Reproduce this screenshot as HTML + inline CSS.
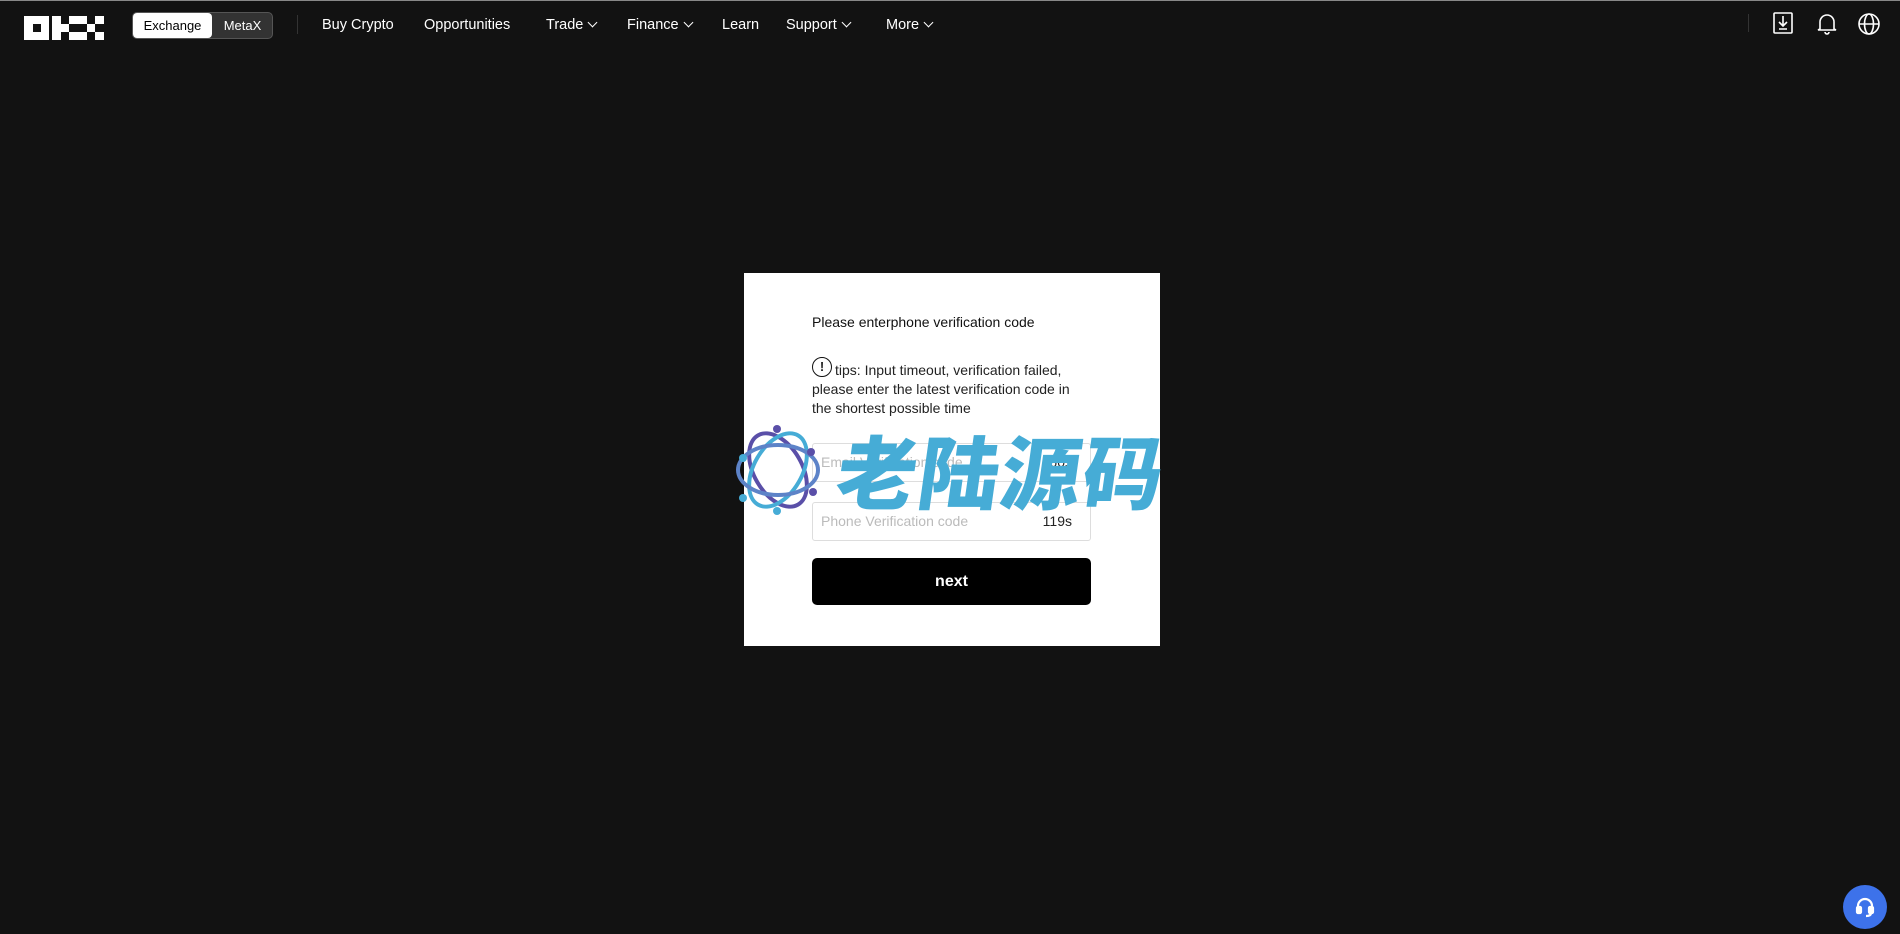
<!DOCTYPE html>
<html><head><meta charset="utf-8"><style>
*{margin:0;padding:0;box-sizing:border-box}
body{width:1900px;height:934px;background:#121212;font-family:"Liberation Sans",sans-serif;position:relative;overflow:hidden;color:#fff}
.topline{position:absolute;left:0;top:0;width:1900px;height:1px;background:#888}
.nav{position:absolute;top:25px;font-size:14.5px;color:#fff;transform:translateY(-50%);white-space:nowrap}
.chev{display:inline-block;width:7px;height:7px;border-right:1.5px solid #fff;border-bottom:1.5px solid #fff;transform:rotate(45deg);margin-left:6px;position:relative;top:-3px}
.toggle{position:absolute;left:132px;top:12px;width:141px;height:27px;border:1px solid #555;border-radius:5px;background:#333;font-size:13px}
.toggle .ex{position:absolute;left:0;top:0;width:79px;height:25px;background:#fff;color:#000;border-radius:4px;text-align:center;line-height:25px}
.toggle .mx{position:absolute;left:79px;top:0;width:61px;height:25px;color:#fff;text-align:center;line-height:25px}
.logo div{position:absolute;background:#fff;width:8.5px;height:8px}
.modal{position:absolute;left:744px;top:273px;width:416px;height:373px;background:#fff;color:#111}
.t1{position:absolute;left:68px;top:41px;font-size:14px}
.tips{position:absolute;left:68px;top:84px;width:270px;font-size:14px;line-height:19px;color:#222}
.ic{display:inline-block;width:20px;height:20px;border:1.6px solid #111;border-radius:50%;text-align:center;font-size:13px;font-weight:bold;line-height:17px;margin-right:3px;vertical-align:4px}
.inp{position:absolute;left:68px;width:279px;height:39px;border:1px solid #ddd;border-radius:3px;font-size:14px;color:#bbb;padding-left:8px;line-height:37px}
.inp span{position:absolute;right:18px;color:#222}
.btn{position:absolute;left:68px;top:285px;width:279px;height:47px;background:#000;border-radius:5px;color:#fff;font-weight:bold;font-size:16px;text-align:center;line-height:47px}
.wm{position:absolute;left:838px;top:424px;font-family:"Noto Sans CJK SC",sans-serif;font-weight:900;font-size:80px;color:#46acd6;letter-spacing:2px;transform:skewX(-8deg);line-height:90px;white-space:nowrap}
.sup{position:absolute;left:1843px;top:885px;width:44px;height:44px;border-radius:50%;background:#3d72ea}
</style></head><body>
<div class="topline"></div>
<div class="logo">
<div style="left:24px;top:16px;width:25px;height:24px"></div>
<div style="left:32.5px;top:24px;background:#121212"></div>
<div style="left:52px;top:16px"></div><div style="left:52px;top:24px"></div><div style="left:52px;top:32px"></div>
<div style="left:60.5px;top:24px"></div><div style="left:69px;top:16px"></div><div style="left:69px;top:32px"></div>
<div style="left:78px;top:16px"></div><div style="left:95px;top:16px"></div><div style="left:86.5px;top:24px"></div>
<div style="left:78px;top:32px"></div><div style="left:95px;top:32px"></div>
</div>
<div class="toggle"><div class="ex">Exchange</div><div class="mx">MetaX</div></div>
<div style="position:absolute;left:297px;top:15px;width:1px;height:19px;background:#333"></div>
<div class="nav" style="left:322px">Buy Crypto</div>
<div class="nav" style="left:424px">Opportunities</div>
<div class="nav" style="left:546px">Trade<i class="chev"></i></div>
<div class="nav" style="left:627px">Finance<i class="chev"></i></div>
<div class="nav" style="left:722px">Learn</div>
<div class="nav" style="left:786px">Support<i class="chev"></i></div>
<div class="nav" style="left:886px">More<i class="chev"></i></div>
<div style="position:absolute;left:1748px;top:14px;width:1px;height:18px;background:#333"></div>
<svg style="position:absolute;left:1772px;top:11px" width="22" height="24" viewBox="0 0 22 24" fill="none" stroke="#fff" stroke-width="1.6"><rect x="2" y="2" width="18" height="20" rx="1"/><path d="M11 5v10M7 11l4 4 4-4M7 18h8"/></svg>
<svg style="position:absolute;left:1815px;top:11px" width="24" height="24" viewBox="0 0 24 24" fill="none" stroke="#fff" stroke-width="1.6"><path d="M5 18V11a7 7 0 0 1 14 0v7l2 1H3z"/><path d="M10 21a2 2 0 0 0 4 0"/></svg>
<svg style="position:absolute;left:1857px;top:12px" width="24" height="24" viewBox="0 0 24 24" fill="none" stroke="#fff" stroke-width="1.6"><circle cx="12" cy="12" r="10"/><ellipse cx="12" cy="12" rx="4.5" ry="10"/><path d="M2 12h20"/></svg>
<div class="modal">
<div class="t1">Please enterphone verification code</div>
<div class="tips"><span class="ic">!</span>tips: Input timeout, verification failed, please enter the latest verification code in the shortest possible time</div>
<div class="inp" style="top:170px">Email Verification code<span>60s</span></div>
<div class="inp" style="top:229px">Phone Verification code<span>119s</span></div>
<div class="btn">next</div>
</div>
<svg style="position:absolute;left:733px;top:422px" width="90" height="96" viewBox="0 0 90 96" fill="none" stroke-width="4">
<ellipse cx="45" cy="48" rx="24" ry="40" stroke="#5a4fa8" transform="rotate(-30 45 48)"/>
<ellipse cx="45" cy="48" rx="24" ry="40" stroke="#46acd6" transform="rotate(30 45 48)"/>
<ellipse cx="45" cy="48" rx="40" ry="25" stroke="#5d83c8"/>
<circle cx="44" cy="7" r="4" fill="#5a4fa8"/><circle cx="78" cy="30" r="4" fill="#5a4fa8"/><circle cx="80" cy="70" r="4" fill="#5a4fa8"/>
<circle cx="10" cy="36" r="4" fill="#46acd6"/><circle cx="10" cy="76" r="4" fill="#46acd6"/><circle cx="44" cy="89" r="4" fill="#46acd6"/>
</svg>
<div class="wm">老陆源码</div>
<div class="sup"><svg width="44" height="44" viewBox="0 0 44 44" fill="none" stroke="#fff" stroke-width="2.2"><path d="M15 24v-3a7 7 0 0 1 14 0v3"/><rect x="14" y="22" width="4" height="6" rx="1" fill="#fff"/><rect x="26" y="22" width="4" height="6" rx="1" fill="#fff"/><path d="M28 28c0 2-2 3-5 3"/></svg></div>
</body></html>
